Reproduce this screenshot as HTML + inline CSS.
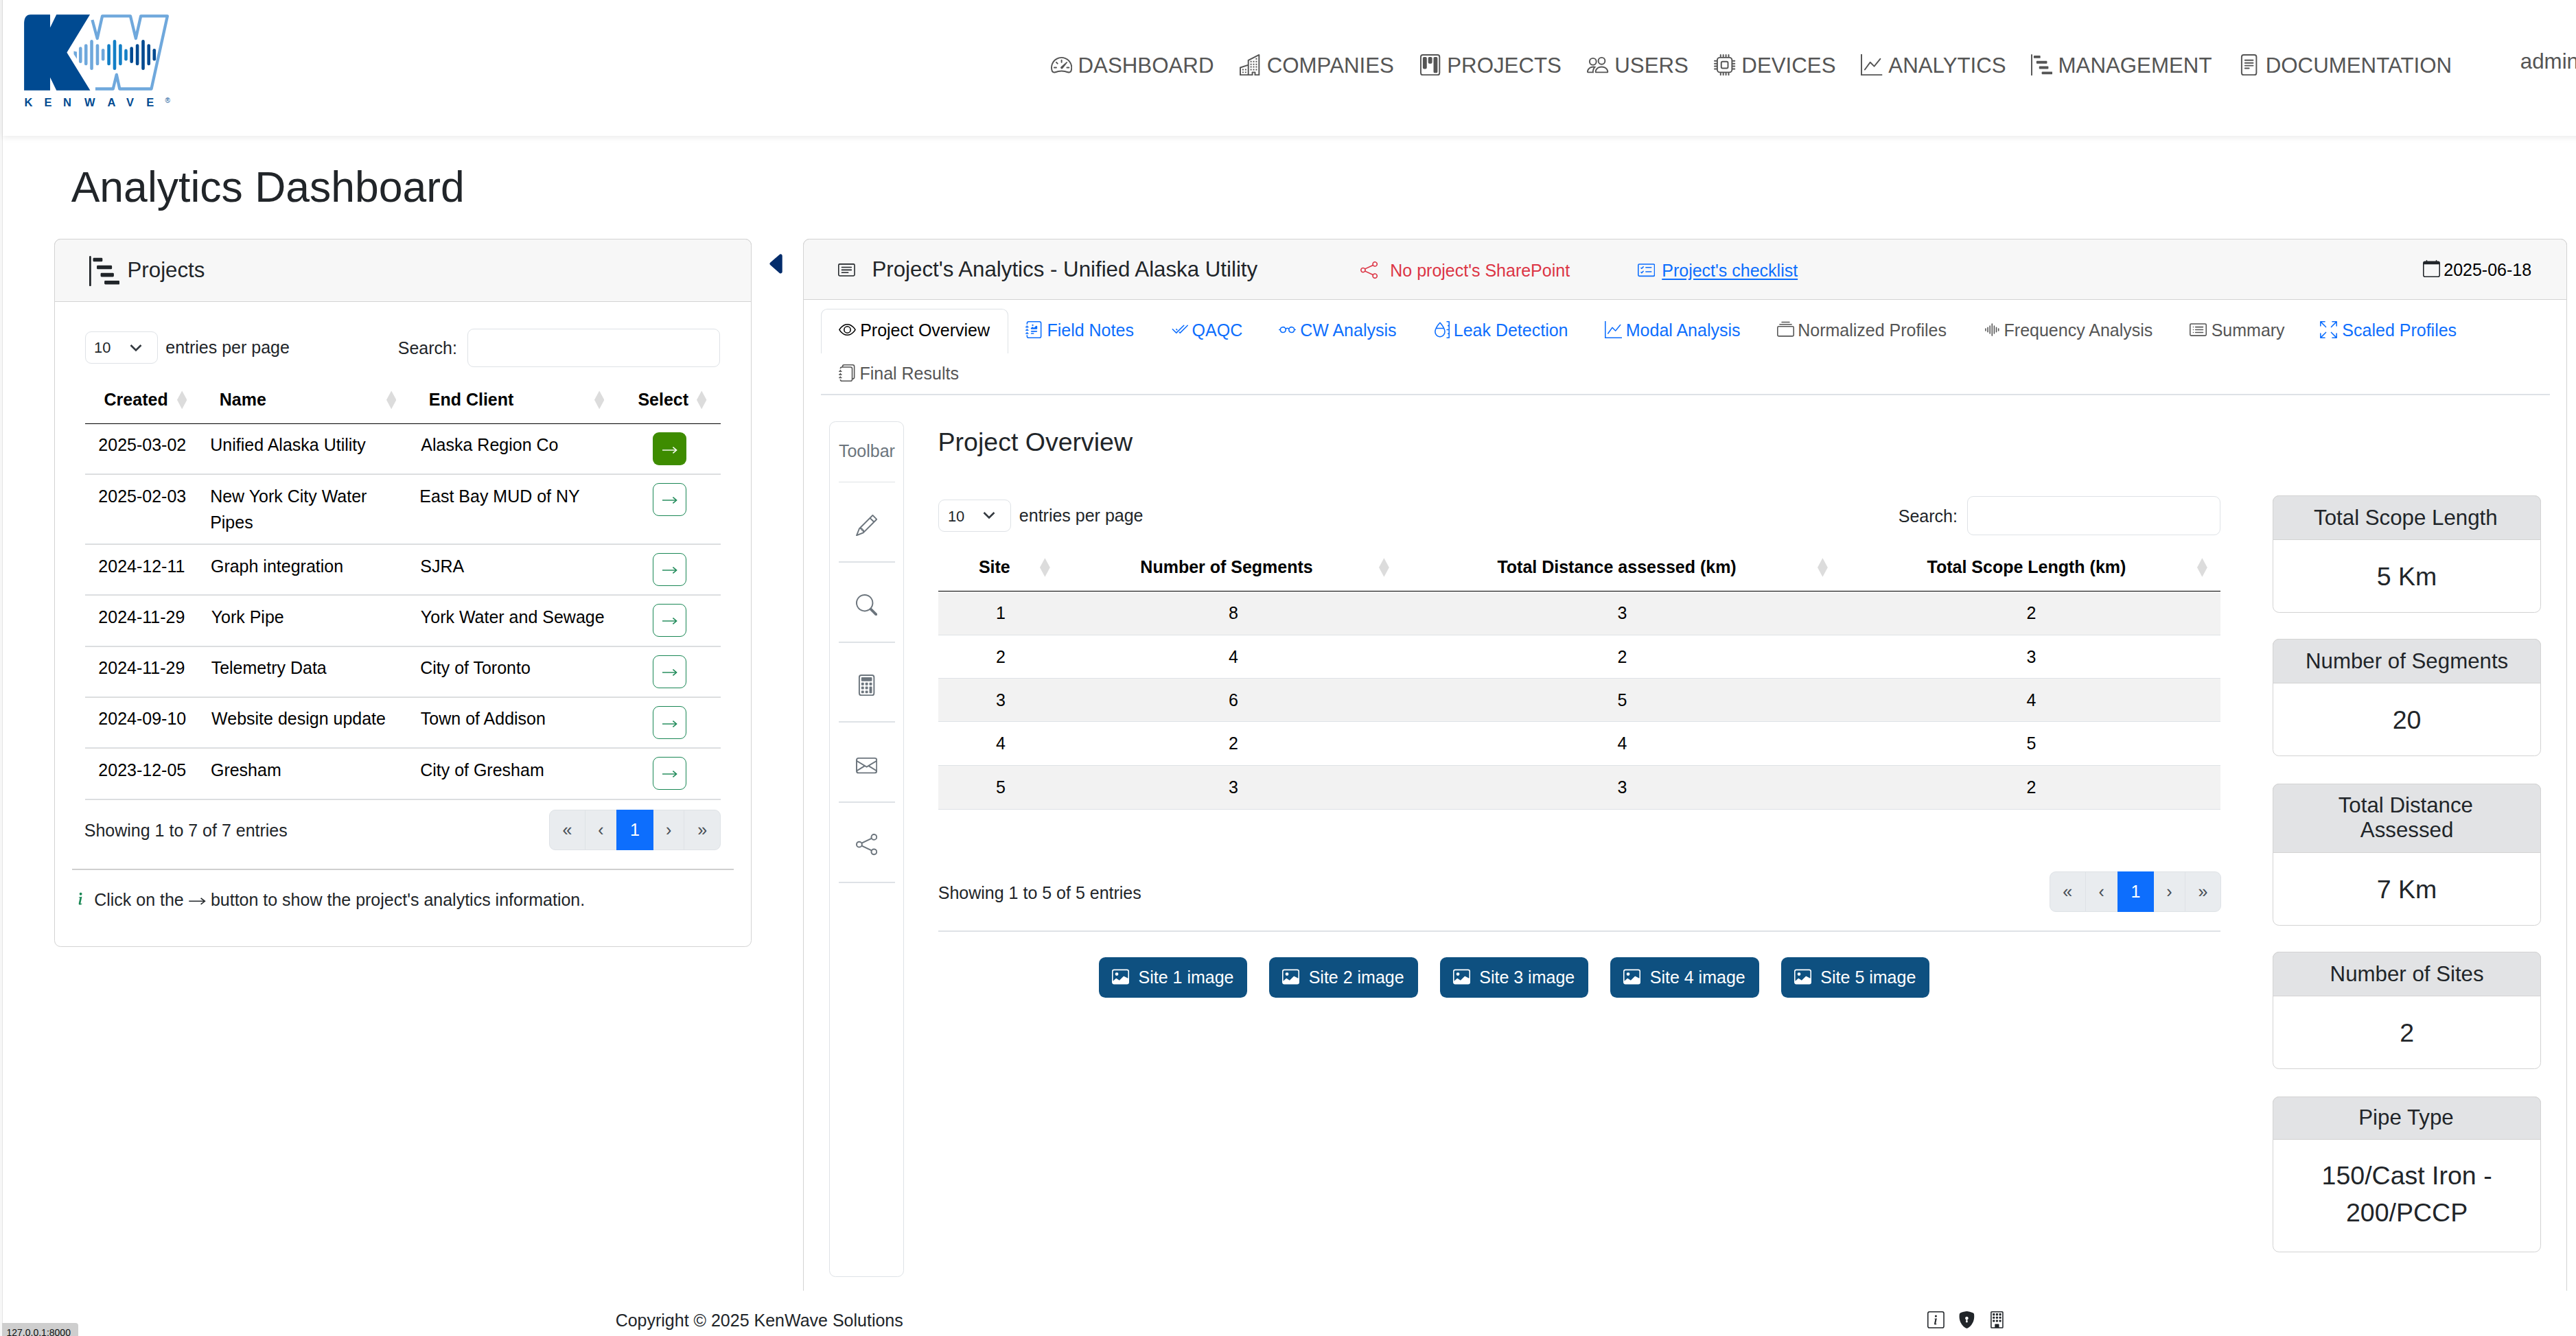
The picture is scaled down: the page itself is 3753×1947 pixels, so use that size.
<!DOCTYPE html>
<html><head><meta charset="utf-8"><title>Analytics Dashboard</title>
<style>
html,body{margin:0;padding:0;}
body{width:3753px;height:1947px;overflow:hidden;position:relative;background:#fff;font-family:"Liberation Sans",sans-serif;color:#212529;}
.a{position:absolute;}
.t{position:absolute;white-space:nowrap;line-height:1;}
svg{display:block;}
</style></head><body>
<div class="a" style="left:0.00px;top:0.00px;width:3.50px;height:1947.00px;background:#f7f7f7;border-right:1px solid #e4e4e4;box-sizing:border-box;"></div>
<div class="a" style="left:4.00px;top:-20.00px;width:3796.00px;height:218.00px;background:#fff;box-shadow:0 2px 9px rgba(0,0,0,.09);"></div>
<svg class="a" style="left:25px;top:15px" width="230" height="150" viewBox="0 0 230 150"><path d="M10.10,116.74 L10.10,19.64 Q10.10,6.17 19.64,6.17 L48.04,6.17 L48.04,25.26 L57.25,6.17 L106.07,6.17 L72.40,61.51 L106.41,116.74 L57.25,116.74 L48.04,97.65 L48.04,116.74 Z" fill="#004a91"/><polyline points="109.44,14.03 116.74,40.97 124.03,8.42 165.00,8.42 172.86,40.97 180.15,8.42 218.88,8.42 195.53,114.49 149.29,114.49 144.80,93.73 139.75,114.49 113.93,114.49" fill="none" stroke="#6fa8dc" stroke-width="4.3" stroke-linejoin="round"/><line x1="92.27" y1="55.52" x2="92.27" y2="74.69" stroke="#6fa8dc" stroke-width="4.6" stroke-linecap="round"/><line x1="100.24" y1="51.59" x2="100.24" y2="78.06" stroke="#6fa8dc" stroke-width="4.6" stroke-linecap="round"/><line x1="108.54" y1="45.41" x2="108.54" y2="84.79" stroke="#6fa8dc" stroke-width="4.6" stroke-linecap="round"/><line x1="116.96" y1="51.59" x2="116.96" y2="78.06" stroke="#6fa8dc" stroke-width="4.6" stroke-linecap="round"/><line x1="125.15" y1="58.32" x2="125.15" y2="71.32" stroke="#6fa8dc" stroke-width="4.6" stroke-linecap="round"/><line x1="133.57" y1="51.59" x2="133.57" y2="78.06" stroke="#137fc6" stroke-width="4.6" stroke-linecap="round"/><line x1="141.99" y1="45.41" x2="141.99" y2="84.79" stroke="#137fc6" stroke-width="4.6" stroke-linecap="round"/><line x1="150.41" y1="51.59" x2="150.41" y2="78.06" stroke="#137fc6" stroke-width="4.6" stroke-linecap="round"/><line x1="158.49" y1="58.88" x2="158.49" y2="71.32" stroke="#137fc6" stroke-width="4.6" stroke-linecap="round"/><line x1="166.69" y1="55.52" x2="166.69" y2="74.69" stroke="#004a91" stroke-width="4.6" stroke-linecap="round"/><line x1="175.10" y1="51.59" x2="175.10" y2="78.06" stroke="#004a91" stroke-width="4.6" stroke-linecap="round"/><line x1="183.52" y1="45.41" x2="183.52" y2="84.79" stroke="#004a91" stroke-width="4.6" stroke-linecap="round"/><line x1="191.72" y1="51.59" x2="191.72" y2="78.06" stroke="#004a91" stroke-width="4.6" stroke-linecap="round"/><line x1="199.80" y1="58.32" x2="199.80" y2="71.32" stroke="#004a91" stroke-width="4.6" stroke-linecap="round"/><polygon points="82.50,59.49 86.99,60.61 86.99,70.72 82.50,63.98" fill="#6fa8dc"/><text x="16.50" y="140.08" font-family="Liberation Sans" font-weight="bold" font-size="16.5" fill="#004a91" text-anchor="middle">K</text><text x="44.90" y="140.08" font-family="Liberation Sans" font-weight="bold" font-size="16.5" fill="#004a91" text-anchor="middle">E</text><text x="72.96" y="140.08" font-family="Liberation Sans" font-weight="bold" font-size="16.5" fill="#004a91" text-anchor="middle">N</text><text x="105.74" y="140.08" font-family="Liberation Sans" font-weight="bold" font-size="16.5" fill="#004a91" text-anchor="middle">W</text><text x="137.50" y="140.08" font-family="Liberation Sans" font-weight="bold" font-size="16.5" fill="#004a91" text-anchor="middle">A</text><text x="164.44" y="140.08" font-family="Liberation Sans" font-weight="bold" font-size="16.5" fill="#004a91" text-anchor="middle">V</text><text x="193.85" y="140.08" font-family="Liberation Sans" font-weight="bold" font-size="16.5" fill="#004a91" text-anchor="middle">E</text><text x="219.10" y="134.70" font-family="Liberation Sans" font-size="10" fill="#004a91" text-anchor="middle">&#174;</text></svg>
<span class="t" style="left:1570.54px;top:80px;font-size:31.25px;color:#555555;">DASHBOARD</span>
<svg class="a" style="left:1530.61px;top:78.66px;" width="31.25" height="31.25" viewBox="0 0 16 16" fill="#555555"><path d="M8 4a.5.5 0 0 1 .5.5V6a.5.5 0 0 1-1 0V4.5A.5.5 0 0 1 8 4M3.732 5.732a.5.5 0 0 1 .707 0l.915.914a.5.5 0 1 1-.708.708l-.914-.915a.5.5 0 0 1 0-.707M2 10a.5.5 0 0 1 .5-.5h1.586a.5.5 0 0 1 0 1H2.5A.5.5 0 0 1 2 10m9.5 0a.5.5 0 0 1 .5-.5h1.5a.5.5 0 0 1 0 1H12a.5.5 0 0 1-.5-.5m.754-4.246a.39.39 0 0 0-.527-.02L7.547 9.31a.91.91 0 1 0 1.302 1.258l3.434-4.297a.39.39 0 0 0-.029-.518z"/><path d="M0 10a8 8 0 1 1 15.547 2.661c-.442 1.253-1.845 1.602-2.932 1.25C11.309 13.488 9.475 13 8 13c-1.474 0-3.31.488-4.615.911-1.087.352-2.49.003-2.932-1.25A8 8 0 0 1 0 10m8-7a7 7 0 0 0-6.603 9.329c.203.575.923.876 1.68.63C4.397 12.533 6.358 12 8 12s3.604.532 4.923.96c.757.245 1.477-.056 1.68-.631A7 7 0 0 0 8 3"/></svg>
<span class="t" style="left:1845.71px;top:80px;font-size:31.25px;color:#555555;">COMPANIES</span>
<svg class="a" style="left:1805.78px;top:78.66px;" width="31.25" height="31.25" viewBox="0 0 16 16" fill="#555555"><path d="M14.763.075A.5.5 0 0 1 15 .5v15a.5.5 0 0 1-.5.5h-3a.5.5 0 0 1-.5-.5V14h-1v1.5a.5.5 0 0 1-.5.5h-9a.5.5 0 0 1-.5-.5V10a.5.5 0 0 1 .342-.474L6 7.64V4.5a.5.5 0 0 1 .276-.447l8-4a.5.5 0 0 1 .487.022M6 8.694 1 10.36V15h5zM7 15h2v-1.5a.5.5 0 0 1 .5-.5h2a.5.5 0 0 1 .5.5V15h2V1.309l-7 3.5z"/><path d="M2 11h1v1H2zm2 0h1v1H4zm-2 2h1v1H2zm2 0h1v1H4zm4-4h1v1H8zm2 0h1v1h-1zm-2 2h1v1H8zm2 0h1v1h-1zm2-2h1v1h-1zm0 2h1v1h-1zM8 7h1v1H8zm2 0h1v1h-1zm2 0h1v1h-1zM8 5h1v1H8zm2 0h1v1h-1zm2 0h1v1h-1zm0-2h1v1h-1z"/></svg>
<span class="t" style="left:2108.24px;top:80px;font-size:31.25px;color:#555555;">PROJECTS</span>
<svg class="a" style="left:2068.31px;top:78.66px;" width="31.25" height="31.25" viewBox="0 0 16 16" fill="#555555"><path d="M13.5 1a1 1 0 0 1 1 1v12a1 1 0 0 1-1 1h-11a1 1 0 0 1-1-1V2a1 1 0 0 1 1-1zm-11-1a2 2 0 0 0-2 2v12a2 2 0 0 0 2 2h11a2 2 0 0 0 2-2V2a2 2 0 0 0-2-2z"/><path d="M6.5 3a1 1 0 0 1 1-1h1a1 1 0 0 1 1 1v3a1 1 0 0 1-1 1h-1a1 1 0 0 1-1-1zm-4 0a1 1 0 0 1 1-1h1a1 1 0 0 1 1 1v7a1 1 0 0 1-1 1h-1a1 1 0 0 1-1-1zm8 0a1 1 0 0 1 1-1h1a1 1 0 0 1 1 1v10a1 1 0 0 1-1 1h-1a1 1 0 0 1-1-1z"/></svg>
<span class="t" style="left:2352.29px;top:80px;font-size:31.25px;color:#555555;">USERS</span>
<svg class="a" style="left:2312.36px;top:78.66px;" width="31.25" height="31.25" viewBox="0 0 16 16" fill="#555555"><path d="M15 14s1 0 1-1-1-4-5-4-5 3-5 4 1 1 1 1zm-7.978-1L7 12.996c.001-.264.167-1.03.76-1.72C8.312 10.629 9.282 10 11 10c1.717 0 2.687.63 3.24 1.276.593.69.758 1.457.76 1.72l-.008.002-.014.002zM11 7a2 2 0 1 0 0-4 2 2 0 0 0 0 4m3-2a3 3 0 1 1-6 0 3 3 0 0 1 6 0M6.936 9.28a6 6 0 0 0-1.23-.247A7 7 0 0 0 5 9c-4 0-5 3-5 4q0 1 1 1h4.216A2.24 2.24 0 0 1 5 13c0-1.01.377-2.042 1.09-2.904.243-.294.526-.569.846-.816M4.92 10A5.5 5.5 0 0 0 4 13H1c0-.26.164-1.03.76-1.724.545-.636 1.492-1.256 3.16-1.275ZM1.5 5.5a3 3 0 1 1 6 0 3 3 0 0 1-6 0m3-2a2 2 0 1 0 0 4 2 2 0 0 0 0-4"/></svg>
<span class="t" style="left:2537.34px;top:80px;font-size:31.25px;color:#555555;">DEVICES</span>
<svg class="a" style="left:2497.41px;top:78.66px;" width="31.25" height="31.25" viewBox="0 0 16 16" fill="#555555"><path d="M5 0a.5.5 0 0 1 .5.5V2h1V.5a.5.5 0 0 1 1 0V2h1V.5a.5.5 0 0 1 1 0V2h1V.5a.5.5 0 0 1 1 0V2A2.5 2.5 0 0 1 14 4.5h1.5a.5.5 0 0 1 0 1H14v1h1.5a.5.5 0 0 1 0 1H14v1h1.5a.5.5 0 0 1 0 1H14v1h1.5a.5.5 0 0 1 0 1H14a2.5 2.5 0 0 1-2.5 2.5v1.5a.5.5 0 0 1-1 0V14h-1v1.5a.5.5 0 0 1-1 0V14h-1v1.5a.5.5 0 0 1-1 0V14h-1v1.5a.5.5 0 0 1-1 0V14A2.5 2.5 0 0 1 2 11.5H.5a.5.5 0 0 1 0-1H2v-1H.5a.5.5 0 0 1 0-1H2v-1H.5a.5.5 0 0 1 0-1H2v-1H.5a.5.5 0 0 1 0-1H2A2.5 2.5 0 0 1 4.5 2V.5A.5.5 0 0 1 5 0m-.5 3A1.5 1.5 0 0 0 3 4.5v7A1.5 1.5 0 0 0 4.5 13h7a1.5 1.5 0 0 0 1.5-1.5v-7A1.5 1.5 0 0 0 11.5 3zM5 6.5A1.5 1.5 0 0 1 6.5 5h3A1.5 1.5 0 0 1 11 6.5v3A1.5 1.5 0 0 1 9.5 11h-3A1.5 1.5 0 0 1 5 9.5zM6.5 6a.5.5 0 0 0-.5.5v3a.5.5 0 0 0 .5.5h3a.5.5 0 0 0 .5-.5v-3a.5.5 0 0 0-.5-.5z"/></svg>
<span class="t" style="left:2751.34px;top:80px;font-size:31.25px;color:#555555;">ANALYTICS</span>
<svg class="a" style="left:2711.41px;top:78.66px;" width="31.25" height="31.25" viewBox="0 0 16 16" fill="#555555"><path d="M0 0h1v15h15v1H0zm14.817 3.113a.5.5 0 0 1 .07.704l-4.5 5.5a.5.5 0 0 1-.74.037L7.06 6.767l-3.656 5.027a.5.5 0 0 1-.808-.588l4-5.5a.5.5 0 0 1 .758-.06l2.609 2.61 4.15-5.073a.5.5 0 0 1 .704-.07"/></svg>
<span class="t" style="left:2998.54px;top:80px;font-size:31.25px;color:#555555;">MANAGEMENT</span>
<svg class="a" style="left:2958.61px;top:78.66px;" width="31.25" height="31.25" viewBox="0 0 16 16" fill="#555555"><path d="M.5 0a.5.5 0 0 1 .5.5v15a.5.5 0 0 1-1 0V.5A.5.5 0 0 1 .5 0M2 1.5a.5.5 0 0 1 .5-.5h4a.5.5 0 0 1 .5.5v1a.5.5 0 0 1-.5.5h-4a.5.5 0 0 1-.5-.5zm2 4a.5.5 0 0 1 .5-.5h7a.5.5 0 0 1 .5.5v1a.5.5 0 0 1-.5.5h-7a.5.5 0 0 1-.5-.5zm2 4a.5.5 0 0 1 .5-.5h6a.5.5 0 0 1 .5.5v1a.5.5 0 0 1-.5.5h-6a.5.5 0 0 1-.5-.5zm2 4a.5.5 0 0 1 .5-.5h7a.5.5 0 0 1 .5.5v1a.5.5 0 0 1-.5.5h-7a.5.5 0 0 1-.5-.5z"/></svg>
<span class="t" style="left:3300.74px;top:80px;font-size:31.25px;color:#555555;">DOCUMENTATION</span>
<svg class="a" style="left:3260.81px;top:78.66px;" width="31.25" height="31.25" viewBox="0 0 16 16" fill="#555555"><path d="M5 4a.5.5 0 0 0 0 1h6a.5.5 0 0 0 0-1zm-.5 2.5A.5.5 0 0 1 5 6h6a.5.5 0 0 1 0 1H5a.5.5 0 0 1-.5-.5M5 8a.5.5 0 0 0 0 1h6a.5.5 0 0 0 0-1zm0 2a.5.5 0 0 0 0 1h3a.5.5 0 0 0 0-1z"/><path d="M2 2a2 2 0 0 1 2-2h8a2 2 0 0 1 2 2v12a2 2 0 0 1-2 2H4a2 2 0 0 1-2-2zm10-1H4a1 1 0 0 0-1 1v12a1 1 0 0 0 1 1h8a1 1 0 0 0 1-1V2a1 1 0 0 0-1-1"/></svg>
<span class="t" style="left:3671.87px;top:74px;font-size:31.25px;color:#555555;">admin</span>
<span class="t" style="left:103.68px;top:241px;font-size:62.5px;color:#212529;">Analytics Dashboard</span>
<div class="a" style="left:78.60px;top:348.40px;width:1016.40px;height:1031.80px;border:1.5px solid #d3d3d3;border-radius:9.4px;box-sizing:border-box;background:#fff;"></div>
<div class="a" style="left:78.60px;top:348.40px;width:1016.40px;height:91.80px;border:1.5px solid #d3d3d3;border-radius:9.4px 9.4px 0 0;box-sizing:border-box;background:#f7f7f7;"></div>
<svg class="a" style="left:129.50px;top:372.80px;" width="44.20" height="44.20" viewBox="0 0 16 16" fill="#212529"><path d="M.5 0a.5.5 0 0 1 .5.5v15a.5.5 0 0 1-1 0V.5A.5.5 0 0 1 .5 0M2 1.5a.5.5 0 0 1 .5-.5h4a.5.5 0 0 1 .5.5v1a.5.5 0 0 1-.5.5h-4a.5.5 0 0 1-.5-.5zm2 4a.5.5 0 0 1 .5-.5h7a.5.5 0 0 1 .5.5v1a.5.5 0 0 1-.5.5h-7a.5.5 0 0 1-.5-.5zm2 4a.5.5 0 0 1 .5-.5h6a.5.5 0 0 1 .5.5v1a.5.5 0 0 1-.5.5h-6a.5.5 0 0 1-.5-.5zm2 4a.5.5 0 0 1 .5-.5h7a.5.5 0 0 1 .5.5v1a.5.5 0 0 1-.5.5h-7a.5.5 0 0 1-.5-.5z"/></svg>
<span class="t" style="left:185.54px;top:378px;font-size:31.25px;color:#212529;">Projects</span>
<div class="a" style="left:124.30px;top:483.40px;width:106.10px;height:46.30px;border:1.5px solid #dee2e6;border-radius:9px;box-sizing:border-box;background:#fff;"></div>
<span class="t" style="left:137.03px;top:496px;font-size:21.875px;color:#212529;">10</span>
<svg class="a" style="left:189.40px;top:500.55px" width="18" height="12" viewBox="0 0 18 12"><polyline points="1.5,2 9,9.5 16.5,2" fill="none" stroke="#343a40" stroke-width="2.6"/></svg>
<span class="t" style="left:241.24px;top:494px;font-size:25px;color:#212529;">entries per page</span>
<span class="t" style="left:579.76px;top:495px;font-size:25px;color:#212529;">Search:</span>
<div class="a" style="left:680.70px;top:478.60px;width:368.80px;height:56.60px;border:1.5px solid #dee2e6;border-radius:9px;box-sizing:border-box;background:#fff;"></div>
<span class="t" style="left:151.57px;top:570px;font-size:25px;font-weight:bold;color:#000;">Created</span>
<span class="t" style="left:319.73px;top:570px;font-size:25px;font-weight:bold;color:#000;">Name</span>
<span class="t" style="left:624.73px;top:570px;font-size:25px;font-weight:bold;color:#000;">End Client</span>
<span class="t" style="left:929.38px;top:570px;font-size:25px;font-weight:bold;color:#000;">Select</span>
<svg class="a" style="left:257.50px;top:568.50px" width="14.40" height="27.70" viewBox="0 0 15 28"><polygon points="7.5,0 15,14 7.5,28 0,14" fill="#dcdcdc"/></svg>
<svg class="a" style="left:563.00px;top:568.50px" width="14.40" height="27.70" viewBox="0 0 15 28"><polygon points="7.5,0 15,14 7.5,28 0,14" fill="#dcdcdc"/></svg>
<svg class="a" style="left:866.00px;top:568.50px" width="14.40" height="27.70" viewBox="0 0 15 28"><polygon points="7.5,0 15,14 7.5,28 0,14" fill="#dcdcdc"/></svg>
<svg class="a" style="left:1015.30px;top:568.50px" width="14.40" height="27.70" viewBox="0 0 15 28"><polygon points="7.5,0 15,14 7.5,28 0,14" fill="#dcdcdc"/></svg>
<div class="a" style="left:124.00px;top:617.00px;width:925.80px;height:1.00px;background:#000;"></div>
<div class="a" style="left:124.00px;top:690.00px;width:925.80px;height:2.00px;background:linear-gradient(#dee2e6 50%,#dadada 50%);"></div>
<div class="a" style="left:124.00px;top:792.00px;width:925.80px;height:2.00px;background:linear-gradient(#dee2e6 50%,#dadada 50%);"></div>
<div class="a" style="left:124.00px;top:866.00px;width:925.80px;height:2.00px;background:linear-gradient(#dee2e6 50%,#dadada 50%);"></div>
<div class="a" style="left:124.00px;top:941.00px;width:925.80px;height:2.00px;background:linear-gradient(#dee2e6 50%,#dadada 50%);"></div>
<div class="a" style="left:124.00px;top:1015.00px;width:925.80px;height:2.00px;background:linear-gradient(#dee2e6 50%,#dadada 50%);"></div>
<div class="a" style="left:124.00px;top:1089.00px;width:925.80px;height:2.00px;background:linear-gradient(#dee2e6 50%,#dadada 50%);"></div>
<div class="a" style="left:124.00px;top:1164.00px;width:925.80px;height:2.00px;background:linear-gradient(#dee2e6 50%,#dadada 50%);"></div>
<span class="t" style="left:143.34px;top:636px;font-size:25px;color:#000;">2025-03-02</span>
<span class="t" style="left:306.27px;top:636px;font-size:25px;color:#000;">Unified Alaska Utility</span>
<span class="t" style="left:613.35px;top:636px;font-size:25px;color:#000;">Alaska Region Co</span>
<div class="a" style="left:951.00px;top:630.30px;width:49.00px;height:47.90px;background:#3e8c00;border-radius:9px;"></div>
<svg class="a" style="left:960px;top:647.80px" width="32" height="16" viewBox="960 647.80 32 16"><line x1="965" y1="655.80" x2="985.2" y2="655.80" stroke="#fff" stroke-width="1.4"/><polyline points="980.4,651.40 985.6,655.80 980.4,660.20" fill="none" stroke="#fff" stroke-width="1.5"/></svg>
<span class="t" style="left:143.34px;top:711px;font-size:25px;color:#000;">2025-02-03</span>
<span class="t" style="left:306.15px;top:711px;font-size:25px;color:#000;">New York City Water</span>
<span class="t" style="left:306.15px;top:749px;font-size:25px;color:#000;">Pipes</span>
<span class="t" style="left:611.35px;top:711px;font-size:25px;color:#000;">East Bay MUD of NY</span>
<div class="a" style="left:951.00px;top:703.80px;width:49.00px;height:47.90px;border:1.5px solid #198754;border-radius:9px;box-sizing:border-box;"></div>
<svg class="a" style="left:960px;top:721.30px" width="32" height="16" viewBox="960 721.30 32 16"><line x1="965" y1="729.30" x2="985.2" y2="729.30" stroke="#198754" stroke-width="1.4"/><polyline points="980.4,724.90 985.6,729.30 980.4,733.70" fill="none" stroke="#198754" stroke-width="1.5"/></svg>
<span class="t" style="left:143.34px;top:813px;font-size:25px;color:#000;">2024-12-11</span>
<span class="t" style="left:306.94px;top:813px;font-size:25px;color:#000;">Graph integration</span>
<span class="t" style="left:612.26px;top:813px;font-size:25px;color:#000;">SJRA</span>
<div class="a" style="left:951.00px;top:805.90px;width:49.00px;height:47.90px;border:1.5px solid #198754;border-radius:9px;box-sizing:border-box;"></div>
<svg class="a" style="left:960px;top:823.40px" width="32" height="16" viewBox="960 823.40 32 16"><line x1="965" y1="831.40" x2="985.2" y2="831.40" stroke="#198754" stroke-width="1.4"/><polyline points="980.4,827.00 985.6,831.40 980.4,835.80" fill="none" stroke="#198754" stroke-width="1.5"/></svg>
<span class="t" style="left:143.34px;top:887px;font-size:25px;color:#000;">2024-11-29</span>
<span class="t" style="left:307.65px;top:887px;font-size:25px;color:#000;">York Pipe</span>
<span class="t" style="left:612.85px;top:887px;font-size:25px;color:#000;">York Water and Sewage</span>
<div class="a" style="left:951.00px;top:879.90px;width:49.00px;height:47.90px;border:1.5px solid #198754;border-radius:9px;box-sizing:border-box;"></div>
<svg class="a" style="left:960px;top:897.40px" width="32" height="16" viewBox="960 897.40 32 16"><line x1="965" y1="905.40" x2="985.2" y2="905.40" stroke="#198754" stroke-width="1.4"/><polyline points="980.4,901.00 985.6,905.40 980.4,909.80" fill="none" stroke="#198754" stroke-width="1.5"/></svg>
<span class="t" style="left:143.34px;top:961px;font-size:25px;color:#000;">2024-11-29</span>
<span class="t" style="left:307.64px;top:961px;font-size:25px;color:#000;">Telemetry Data</span>
<span class="t" style="left:612.13px;top:961px;font-size:25px;color:#000;">City of Toronto</span>
<div class="a" style="left:951.00px;top:954.80px;width:49.00px;height:47.90px;border:1.5px solid #198754;border-radius:9px;box-sizing:border-box;"></div>
<svg class="a" style="left:960px;top:972.30px" width="32" height="16" viewBox="960 972.30 32 16"><line x1="965" y1="980.30" x2="985.2" y2="980.30" stroke="#198754" stroke-width="1.4"/><polyline points="980.4,975.90 985.6,980.30 980.4,984.70" fill="none" stroke="#198754" stroke-width="1.5"/></svg>
<span class="t" style="left:143.34px;top:1035px;font-size:25px;color:#000;">2024-09-10</span>
<span class="t" style="left:308.09px;top:1035px;font-size:25px;color:#000;">Website design update</span>
<span class="t" style="left:612.84px;top:1035px;font-size:25px;color:#000;">Town of Addison</span>
<div class="a" style="left:951.00px;top:1029.00px;width:49.00px;height:47.90px;border:1.5px solid #198754;border-radius:9px;box-sizing:border-box;"></div>
<svg class="a" style="left:960px;top:1046.50px" width="32" height="16" viewBox="960 1046.50 32 16"><line x1="965" y1="1054.50" x2="985.2" y2="1054.50" stroke="#198754" stroke-width="1.4"/><polyline points="980.4,1050.10 985.6,1054.50 980.4,1058.90" fill="none" stroke="#198754" stroke-width="1.5"/></svg>
<span class="t" style="left:143.34px;top:1110px;font-size:25px;color:#000;">2023-12-05</span>
<span class="t" style="left:306.94px;top:1110px;font-size:25px;color:#000;">Gresham</span>
<span class="t" style="left:612.13px;top:1110px;font-size:25px;color:#000;">City of Gresham</span>
<div class="a" style="left:951.00px;top:1102.80px;width:49.00px;height:47.90px;border:1.5px solid #198754;border-radius:9px;box-sizing:border-box;"></div>
<svg class="a" style="left:960px;top:1120.30px" width="32" height="16" viewBox="960 1120.30 32 16"><line x1="965" y1="1128.30" x2="985.2" y2="1128.30" stroke="#198754" stroke-width="1.4"/><polyline points="980.4,1123.90 985.6,1128.30 980.4,1132.70" fill="none" stroke="#198754" stroke-width="1.5"/></svg>
<div class="a" style="left:800.10px;top:1179.90px;width:249.70px;height:58.70px;background:#e9ecef;border:1.5px solid #dee2e6;border-radius:9px;box-sizing:border-box;"></div>
<span class="t" style="left:819.45px;top:1197px;font-size:25px;color:#495057;">«</span>
<div class="a" style="left:852.20px;top:1179.90px;width:1.00px;height:58.70px;background:#dee2e6;"></div>
<span class="t" style="left:871.19px;top:1197px;font-size:25px;color:#495057;">‹</span>
<div class="a" style="left:898.00px;top:1179.90px;width:54.00px;height:58.70px;background:#0d6efd;"></div>
<span class="t" style="left:918.05px;top:1197px;font-size:25px;color:#fff;">1</span>
<span class="t" style="left:970.09px;top:1197px;font-size:25px;color:#495057;">›</span>
<div class="a" style="left:996.00px;top:1179.90px;width:1.00px;height:58.70px;background:#dee2e6;"></div>
<div class="a" style="left:996.00px;top:1179.90px;width:1.00px;height:58.70px;background:#dee2e6;"></div>
<span class="t" style="left:1016.20px;top:1197px;font-size:25px;color:#495057;">»</span>
<span class="t" style="left:122.76px;top:1198px;font-size:25px;color:#212529;">Showing 1 to 7 of 7 entries</span>
<div class="a" style="left:104.90px;top:1266.40px;width:963.90px;height:1.60px;background:#cfcfcf;"></div>
<svg class="a" style="left:101.91px;top:1293.97px;" width="31.25" height="31.25" viewBox="0 0 16 16" fill="#198754"><path d="m8.93 6.588-2.29.287-.082.38.45.083c.294.07.352.176.288.469l-.738 3.468c-.194.897.105 1.319.808 1.319.545 0 1.178-.252 1.465-.598l.088-.416c-.2.176-.492.246-.686.246-.275 0-.375-.193-.304-.533zM9 4.5a1 1 0 1 1-2 0 1 1 0 0 1 2 0"/></svg>
<span class="t" style="left:137.13px;top:1299px;font-size:25px;color:#212529;">Click on the </span>
<span class="t" style="left:306.89px;top:1299px;font-size:25px;color:#212529;">button to show the project's analytics information.</span>
<svg class="a" style="left:270px;top:1303px" width="34" height="20" viewBox="270 1303 34 20"><line x1="275.3" y1="1313.3" x2="298" y2="1313.3" stroke="#212529" stroke-width="1.5"/><polyline points="292.6,1308.8 298.4,1313.3 292.6,1317.8" fill="none" stroke="#212529" stroke-width="1.6"/></svg>
<svg class="a" style="left:1112.81px;top:364.55px;" width="38.88" height="38.88" viewBox="0 0 16 16" fill="#032c6b"><path d="m3.86 8.753 5.482 4.796c.646.566 1.658.106 1.658-.753V3.204a1 1 0 0 0-1.659-.753l-5.48 4.796a1 1 0 0 0 0 1.506z"/></svg>
<div class="a" style="left:1170.00px;top:348.40px;width:2570.20px;height:1611.60px;border:1.5px solid #d3d3d3;border-radius:9.4px;box-sizing:border-box;background:#fff;"></div>
<div class="a" style="left:1170.00px;top:348.40px;width:2570.20px;height:88.80px;border:1.5px solid #d3d3d3;border-radius:9.4px 9.4px 0 0;box-sizing:border-box;background:#f7f7f7;"></div>
<svg class="a" style="left:1220.90px;top:380.90px;" width="24.80" height="24.80" viewBox="0 0 16 16" fill="#212529"><path d="M14.5 3a.5.5 0 0 1 .5.5v9a.5.5 0 0 1-.5.5h-13a.5.5 0 0 1-.5-.5v-9a.5.5 0 0 1 .5-.5zm-13-1A1.5 1.5 0 0 0 0 3.5v9A1.5 1.5 0 0 0 1.5 14h13a1.5 1.5 0 0 0 1.5-1.5v-9A1.5 1.5 0 0 0 14.5 2z"/><path d="M3 5.5a.5.5 0 0 1 .5-.5h9a.5.5 0 0 1 0 1h-9a.5.5 0 0 1-.5-.5M3 8a.5.5 0 0 1 .5-.5h9a.5.5 0 0 1 0 1h-9A.5.5 0 0 1 3 8m0 2.5a.5.5 0 0 1 .5-.5h6a.5.5 0 0 1 0 1h-6a.5.5 0 0 1-.5-.5"/></svg>
<span class="t" style="left:1270.44px;top:377px;font-size:31.25px;color:#212529;">Project's Analytics - Unified Alaska Utility</span>
<svg class="a" style="left:1982.40px;top:381.40px;" width="25.10" height="25.10" viewBox="0 0 16 16" fill="#dc3545"><path d="M13.5 1a1.5 1.5 0 1 0 0 3 1.5 1.5 0 0 0 0-3M11 2.5a2.5 2.5 0 1 1 .603 1.628l-6.718 3.12a2.5 2.5 0 0 1 0 1.504l6.718 3.12a2.5 2.5 0 1 1-.488.876l-6.718-3.12a2.5 2.5 0 1 1 0-3.256l6.718-3.12A2.5 2.5 0 0 1 11 2.5m-8.5 4a1.5 1.5 0 1 0 0 3 1.5 1.5 0 0 0 0-3m11 5.5a1.5 1.5 0 1 0 0 3 1.5 1.5 0 0 0 0-3"/></svg>
<span class="t" style="left:2025.25px;top:382px;font-size:25px;color:#dc3545;">No project's SharePoint</span>
<svg class="a" style="left:2385.60px;top:380.84px;" width="25.30" height="25.30" viewBox="0 0 16 16" fill="#0d6efd"><path d="M14.5 3a.5.5 0 0 1 .5.5v9a.5.5 0 0 1-.5.5h-13a.5.5 0 0 1-.5-.5v-9a.5.5 0 0 1 .5-.5zm-13-1A1.5 1.5 0 0 0 0 3.5v9A1.5 1.5 0 0 0 1.5 14h13a1.5 1.5 0 0 0 1.5-1.5v-9A1.5 1.5 0 0 0 14.5 2z"/><path d="M7 5.5a.5.5 0 0 1 .5-.5h5a.5.5 0 0 1 0 1h-5a.5.5 0 0 1-.5-.5m-1.496-.854a.5.5 0 0 1 0 .708l-1.5 1.5a.5.5 0 0 1-.708 0l-.5-.5a.5.5 0 1 1 .708-.708l.146.147 1.146-1.147a.5.5 0 0 1 .708 0M7 9.5a.5.5 0 0 1 .5-.5h5a.5.5 0 0 1 0 1h-5a.5.5 0 0 1-.5-.5m-1.496-.854a.5.5 0 0 1 0 .708l-1.5 1.5a.5.5 0 0 1-.708 0l-.5-.5a.5.5 0 0 1 .708-.708l.146.147 1.146-1.147a.5.5 0 0 1 .708 0"/></svg>
<span class="t" style="left:2421.25px;top:382px;font-size:25px;color:#0d6efd;text-decoration:underline;text-underline-offset:3px;">Project's checklist</span>
<svg class="a" style="left:3529.70px;top:379.40px;" width="25.00" height="25.00" viewBox="0 0 16 16" fill="#212529"><path d="M3.5 0a.5.5 0 0 1 .5.5V1h8V.5a.5.5 0 0 1 1 0V1h1a2 2 0 0 1 2 2v11a2 2 0 0 1-2 2H2a2 2 0 0 1-2-2V3a2 2 0 0 1 2-2h1V.5a.5.5 0 0 1 .5-.5M1 4v10a1 1 0 0 0 1 1h12a1 1 0 0 0 1-1V4z"/></svg>
<span class="t" style="left:3560.24px;top:381px;font-size:25px;color:#000;">2025-06-18</span>
<div class="a" style="left:1195.80px;top:574.30px;width:2518.80px;height:1.60px;background:#dee2e6;"></div>
<div class="a" style="left:1196.30px;top:449.80px;width:272.50px;height:65.20px;border:1.5px solid #dee2e6;border-bottom:none;border-radius:9.4px 9.4px 0 0;box-sizing:border-box;background:#fff;"></div>
<svg class="a" style="left:1221.90px;top:468.12px;" width="25.00" height="25.00" viewBox="0 0 16 16" fill="#000"><path d="M16 8s-3-5.5-8-5.5S0 8 0 8s3 5.5 8 5.5S16 8 16 8M1.173 8a13 13 0 0 1 1.66-2.043C4.12 4.668 5.88 3.5 8 3.5s3.879 1.168 5.168 2.457A13 13 0 0 1 14.828 8q-.086.13-.195.288c-.335.48-.83 1.12-1.465 1.755C11.879 11.332 10.119 12.5 8 12.5s-3.879-1.168-5.168-2.457A13 13 0 0 1 1.172 8z"/><path d="M8 5.5a2.5 2.5 0 1 0 0 5 2.5 2.5 0 0 0 0-5M4.5 8a3.5 3.5 0 1 1 7 0 3.5 3.5 0 0 1-7 0"/></svg>
<span class="t" style="left:1253.15px;top:469px;font-size:25px;color:#000;">Project Overview</span>
<svg class="a" style="left:1493.94px;top:468.12px;" width="25.00" height="25.00" viewBox="0 0 16 16" fill="#0d6efd"><path d="M7.5 3.75a.75.75 0 1 1-1.5 0 .75.75 0 0 1 1.5 0m-.861 1.542 1.33.886 1.854-1.855a.25.25 0 0 1 .289-.047L11 4.75V7a.5.5 0 0 1-.5.5h-5A.5.5 0 0 1 5 7v-.5s1.54-1.274 1.639-1.208M5 9.5a.5.5 0 0 1 .5-.5h5a.5.5 0 0 1 0 1h-5a.5.5 0 0 1-.5-.5m0 2a.5.5 0 0 1 .5-.5h2a.5.5 0 0 1 0 1h-2a.5.5 0 0 1-.5-.5"/><path d="M3 0h10a2 2 0 0 1 2 2v12a2 2 0 0 1-2 2H3a2 2 0 0 1-2-2v-1h1v1a1 1 0 0 0 1 1h10a1 1 0 0 0 1-1V2a1 1 0 0 0-1-1H3a1 1 0 0 0-1 1v1H1V2a2 2 0 0 1 2-2"/><path d="M1 5v-.5a.5.5 0 0 1 1 0V5h.5a.5.5 0 0 1 0 1h-2a.5.5 0 0 1 0-1zm0 3v-.5a.5.5 0 0 1 1 0V8h.5a.5.5 0 0 1 0 1h-2a.5.5 0 0 1 0-1zm0 3v-.5a.5.5 0 0 1 1 0v.5h.5a.5.5 0 0 1 0 1h-2a.5.5 0 0 1 0-1z"/></svg>
<span class="t" style="left:1525.45px;top:469px;font-size:25px;color:#0d6efd;">Field Notes</span>
<svg class="a" style="left:1706.30px;top:468.12px;" width="25.00" height="25.00" viewBox="0 0 16 16" fill="#0d6efd"><path d="M12.354 4.354a.5.5 0 0 0-.708-.708L5 10.293 1.854 7.146a.5.5 0 1 0-.708.708l3.5 3.5a.5.5 0 0 0 .708 0zm-4.208 7-.896-.897.707-.707.543.543 6.646-6.647a.5.5 0 0 1 .708.708l-7 7a.5.5 0 0 1-.708 0"/><path d="m5.354 7.146.896.897-.707.707-.897-.896a.5.5 0 1 1 .708-.708"/></svg>
<span class="t" style="left:1736.62px;top:469px;font-size:25px;color:#0d6efd;">QAQC</span>
<svg class="a" style="left:1862.90px;top:468.12px;" width="25.00" height="25.00" viewBox="0 0 16 16" fill="#0d6efd"><path d="M4 6a2 2 0 1 1 0 4 2 2 0 0 1 0-4m2.625.547a3 3 0 0 0-5.584.953H.5a.5.5 0 0 0 0 1h.541A3 3 0 0 0 7 8a1 1 0 0 1 2 0 3 3 0 0 0 5.959.5h.541a.5.5 0 0 0 0-1h-.541a3 3 0 0 0-5.584-.953A2 2 0 0 0 8 6c-.532 0-1.016.208-1.375.547M14 8a2 2 0 1 1-4 0 2 2 0 0 1 4 0"/></svg>
<span class="t" style="left:1894.23px;top:469px;font-size:25px;color:#0d6efd;">CW Analysis</span>
<svg class="a" style="left:2086.88px;top:468.12px;" width="25.00" height="25.00" viewBox="0 0 16 16" fill="#0d6efd"><path d="M13.5 0a.5.5 0 0 0 0 1H15v2.75h-.5a.5.5 0 0 0 0 1h.5V7.5h-1.5a.5.5 0 0 0 0 1H15v2.75h-.5a.5.5 0 0 0 0 1h.5V15h-1.5a.5.5 0 0 0 0 1h2a.5.5 0 0 0 .5-.5V.5a.5.5 0 0 0-.5-.5zM7 1.5l.364-.343a.5.5 0 0 0-.728 0l-.002.002-.006.007-.022.023-.08.088a29 29 0 0 0-1.274 1.517c-.769.983-1.714 2.325-2.385 3.727C2.368 7.564 2 8.682 2 9.733 2 12.614 4.212 15 7 15s5-2.386 5-5.267c0-1.05-.368-2.169-.867-3.212-.671-1.402-1.616-2.744-2.385-3.727a29 29 0 0 0-1.354-1.605l-.022-.023-.006-.007-.002-.001L7 1.5zm0 0-.364-.343zm-.016.766L7 2.247l.016.019c.24.274.572.667.944 1.144.611.781 1.32 1.776 1.901 2.827H4.14c.58-1.051 1.29-2.046 1.9-2.827.373-.477.706-.87.945-1.144zM3 9.733c0-.755.244-1.612.638-2.496h6.724c.395.884.638 1.741.638 2.496C11 12.117 9.182 14 7 14s-4-1.883-4-4.267"/></svg>
<span class="t" style="left:2117.75px;top:469px;font-size:25px;color:#0d6efd;">Leak Detection</span>
<svg class="a" style="left:2337.80px;top:468.12px;" width="25.00" height="25.00" viewBox="0 0 16 16" fill="#0d6efd"><path d="M0 0h1v15h15v1H0zm14.817 3.113a.5.5 0 0 1 .07.704l-4.5 5.5a.5.5 0 0 1-.74.037L7.06 6.767l-3.656 5.027a.5.5 0 0 1-.808-.588l4-5.5a.5.5 0 0 1 .758-.06l2.609 2.61 4.15-5.073a.5.5 0 0 1 .704-.07"/></svg>
<span class="t" style="left:2368.75px;top:469px;font-size:25px;color:#0d6efd;">Modal Analysis</span>
<svg class="a" style="left:2588.60px;top:468.12px;" width="25.00" height="25.00" viewBox="0 0 16 16" fill="#555555"><path d="M2.5 3.5a.5.5 0 0 1 0-1h11a.5.5 0 0 1 0 1zm2-2a.5.5 0 0 1 0-1h7a.5.5 0 0 1 0 1zM0 13a1.5 1.5 0 0 0 1.5 1.5h13A1.5 1.5 0 0 0 16 13V6a1.5 1.5 0 0 0-1.5-1.5h-13A1.5 1.5 0 0 0 0 6zm1.5.5A.5.5 0 0 1 1 13V6a.5.5 0 0 1 .5-.5h13a.5.5 0 0 1 .5.5v7a.5.5 0 0 1-.5.5z"/></svg>
<span class="t" style="left:2619.25px;top:469px;font-size:25px;color:#555555;">Normalized Profiles</span>
<svg class="a" style="left:2888.97px;top:468.12px;" width="25.00" height="25.00" viewBox="0 0 16 16" fill="#555555"><path d="M8.5 2a.5.5 0 0 1 .5.5v11a.5.5 0 0 1-1 0v-11a.5.5 0 0 1 .5-.5m-2 2a.5.5 0 0 1 .5.5v7a.5.5 0 0 1-1 0v-7a.5.5 0 0 1 .5-.5m4 0a.5.5 0 0 1 .5.5v7a.5.5 0 0 1-1 0v-7a.5.5 0 0 1 .5-.5m-6 1.5A.5.5 0 0 1 5 6v4a.5.5 0 0 1-1 0V6a.5.5 0 0 1 .5-.5m8 0a.5.5 0 0 1 .5.5v4a.5.5 0 0 1-1 0V6a.5.5 0 0 1 .5-.5m-10 1A.5.5 0 0 1 3 7v2a.5.5 0 0 1-1 0V7a.5.5 0 0 1 .5-.5m12 0a.5.5 0 0 1 .5.5v2a.5.5 0 0 1-1 0V7a.5.5 0 0 1 .5-.5"/></svg>
<span class="t" style="left:2919.55px;top:469px;font-size:25px;color:#555555;">Frequency Analysis</span>
<svg class="a" style="left:3189.60px;top:468.12px;" width="25.00" height="25.00" viewBox="0 0 16 16" fill="#555555"><path d="M14.5 3a.5.5 0 0 1 .5.5v9a.5.5 0 0 1-.5.5h-13a.5.5 0 0 1-.5-.5v-9a.5.5 0 0 1 .5-.5zm-13-1A1.5 1.5 0 0 0 0 3.5v9A1.5 1.5 0 0 0 1.5 14h13a1.5 1.5 0 0 0 1.5-1.5v-9A1.5 1.5 0 0 0 14.5 2z"/><path d="M5 8a.5.5 0 0 1 .5-.5h7a.5.5 0 0 1 0 1h-7A.5.5 0 0 1 5 8m0-2.5a.5.5 0 0 1 .5-.5h7a.5.5 0 0 1 0 1h-7a.5.5 0 0 1-.5-.5m0 5a.5.5 0 0 1 .5-.5h7a.5.5 0 0 1 0 1h-7a.5.5 0 0 1-.5-.5m-1-5a.5.5 0 1 1-1 0 .5.5 0 0 1 1 0M4 8a.5.5 0 1 1-1 0 .5.5 0 0 1 1 0m0 2.5a.5.5 0 1 1-1 0 .5.5 0 0 1 1 0"/></svg>
<span class="t" style="left:3221.66px;top:469px;font-size:25px;color:#555555;">Summary</span>
<svg class="a" style="left:3380.00px;top:468.12px;" width="25.00" height="25.00" viewBox="0 0 16 16" fill="#0d6efd"><path d="M5.828 10.172a.5.5 0 0 0-.707 0l-4.096 4.096V11.5a.5.5 0 0 0-1 0v3.975a.5.5 0 0 0 .5.5H4.5a.5.5 0 0 0 0-1H1.732l4.096-4.096a.5.5 0 0 0 0-.707m4.344 0a.5.5 0 0 1 .707 0l4.096 4.096V11.5a.5.5 0 1 1 1 0v3.975a.5.5 0 0 1-.5.5H11.5a.5.5 0 0 1 0-1h2.768l-4.096-4.096a.5.5 0 0 1 0-.707m0-4.344a.5.5 0 0 0 .707 0l4.096-4.096V4.5a.5.5 0 1 0 1 0V.525a.5.5 0 0 0-.5-.5H11.5a.5.5 0 0 0 0 1h2.768l-4.096 4.096a.5.5 0 0 0 0 .707m-4.344 0a.5.5 0 0 1-.707 0L1.025 1.732V4.5a.5.5 0 0 1-1 0V.525a.5.5 0 0 1 .5-.5H4.5a.5.5 0 0 1 0 1H1.732l4.096 4.096a.5.5 0 0 1 0 .707"/></svg>
<span class="t" style="left:3412.36px;top:469px;font-size:25px;color:#0d6efd;">Scaled Profiles</span>
<svg class="a" style="left:1221.90px;top:531.12px;" width="25.00" height="25.00" viewBox="0 0 16 16" fill="#555555"><path d="M5 0h8a2 2 0 0 1 2 2v10a2 2 0 0 1-2 2 2 2 0 0 1-2 2H3a2 2 0 0 1-2-2h1a1 1 0 0 0 1 1h8a1 1 0 0 0 1-1V4a1 1 0 0 0-1-1H3a1 1 0 0 0-1 1H1a2 2 0 0 1 2-2h8a2 2 0 0 1 2 2v9a1 1 0 0 0 1-1V2a1 1 0 0 0-1-1H5a1 1 0 0 0-1 1H3a2 2 0 0 1 2-2"/><path d="M1 6v-.5a.5.5 0 0 1 1 0V6h.5a.5.5 0 0 1 0 1h-2a.5.5 0 0 1 0-1zm0 3v-.5a.5.5 0 0 1 1 0V9h.5a.5.5 0 0 1 0 1h-2a.5.5 0 0 1 0-1zm0 2.5v.5H.5a.5.5 0 0 0 0 1h2a.5.5 0 0 0 0-1H2v-.5a.5.5 0 0 0-1 0"/></svg>
<span class="t" style="left:1252.45px;top:532px;font-size:25px;color:#555555;">Final Results</span>
<div class="a" style="left:1207.80px;top:613.90px;width:108.80px;height:1247.60px;border:1.5px solid #dee2e6;border-radius:9.4px;box-sizing:border-box;background:#fff;"></div>
<span class="t" style="left:1221.94px;top:645px;font-size:25px;color:#6c757d;">Toolbar</span>
<div class="a" style="left:1222.00px;top:701.75px;width:82.10px;height:1.50px;background:#dee2e6;"></div>
<div class="a" style="left:1222.00px;top:818.35px;width:82.10px;height:1.50px;background:#dee2e6;"></div>
<div class="a" style="left:1222.00px;top:935.25px;width:82.10px;height:1.50px;background:#dee2e6;"></div>
<div class="a" style="left:1222.00px;top:1051.25px;width:82.10px;height:1.50px;background:#dee2e6;"></div>
<div class="a" style="left:1222.00px;top:1168.25px;width:82.10px;height:1.50px;background:#dee2e6;"></div>
<div class="a" style="left:1222.00px;top:1285.25px;width:82.10px;height:1.50px;background:#dee2e6;"></div>
<svg class="a" style="left:1246.90px;top:750.00px;" width="31.25" height="31.25" viewBox="0 0 16 16" fill="#6c757d"><path d="M12.146.146a.5.5 0 0 1 .708 0l3 3a.5.5 0 0 1 0 .708l-10 10a.5.5 0 0 1-.168.11l-5 2a.5.5 0 0 1-.65-.65l2-5a.5.5 0 0 1 .11-.168zM11.207 2.5 13.5 4.793 14.793 3.5 12.5 1.207zm1.586 3L10.5 3.207 4 9.707V10h.5a.5.5 0 0 1 .5.5v.5h.5a.5.5 0 0 1 .5.5v.5h.293zm-9.761 5.175-.106.106-1.528 3.821 3.821-1.528.106-.106A.5.5 0 0 1 5 12.5V12h-.5a.5.5 0 0 1-.5-.5V11h-.5a.5.5 0 0 1-.468-.325"/></svg>
<svg class="a" style="left:1246.90px;top:865.50px;" width="31.25" height="31.25" viewBox="0 0 16 16" fill="#6c757d"><path d="M11.742 10.344a6.5 6.5 0 1 0-1.397 1.398h-.001q.044.06.098.115l3.85 3.85a1 1 0 0 0 1.415-1.414l-3.85-3.85a1 1 0 0 0-.115-.1zM12 6.5a5.5 5.5 0 1 1-11 0 5.5 5.5 0 0 1 11 0"/></svg>
<svg class="a" style="left:1246.90px;top:982.50px;" width="31.25" height="31.25" viewBox="0 0 16 16" fill="#6c757d"><path d="M12 1a1 1 0 0 1 1 1v12a1 1 0 0 1-1 1H4a1 1 0 0 1-1-1V2a1 1 0 0 1 1-1zM4 0a2 2 0 0 0-2 2v12a2 2 0 0 0 2 2h8a2 2 0 0 0 2-2V2a2 2 0 0 0-2-2z"/><path d="M4 2.5a.5.5 0 0 1 .5-.5h7a.5.5 0 0 1 .5.5v2a.5.5 0 0 1-.5.5h-7a.5.5 0 0 1-.5-.5zm0 4a.5.5 0 0 1 .5-.5h1a.5.5 0 0 1 .5.5v1a.5.5 0 0 1-.5.5h-1a.5.5 0 0 1-.5-.5zm0 3a.5.5 0 0 1 .5-.5h1a.5.5 0 0 1 .5.5v1a.5.5 0 0 1-.5.5h-1a.5.5 0 0 1-.5-.5zm0 3a.5.5 0 0 1 .5-.5h1a.5.5 0 0 1 .5.5v1a.5.5 0 0 1-.5.5h-1a.5.5 0 0 1-.5-.5zm3-6a.5.5 0 0 1 .5-.5h1a.5.5 0 0 1 .5.5v1a.5.5 0 0 1-.5.5h-1a.5.5 0 0 1-.5-.5zm0 3a.5.5 0 0 1 .5-.5h1a.5.5 0 0 1 .5.5v1a.5.5 0 0 1-.5.5h-1a.5.5 0 0 1-.5-.5zm0 3a.5.5 0 0 1 .5-.5h1a.5.5 0 0 1 .5.5v1a.5.5 0 0 1-.5.5h-1a.5.5 0 0 1-.5-.5zm3-6a.5.5 0 0 1 .5-.5h1a.5.5 0 0 1 .5.5v1a.5.5 0 0 1-.5.5h-1a.5.5 0 0 1-.5-.5zm0 3a.5.5 0 0 1 .5-.5h1a.5.5 0 0 1 .5.5v4a.5.5 0 0 1-.5.5h-1a.5.5 0 0 1-.5-.5z"/></svg>
<svg class="a" style="left:1246.90px;top:1100.10px;" width="31.25" height="31.25" viewBox="0 0 16 16" fill="#6c757d"><path d="M0 4a2 2 0 0 1 2-2h12a2 2 0 0 1 2 2v8a2 2 0 0 1-2 2H2a2 2 0 0 1-2-2zm2-1a1 1 0 0 0-1 1v.217l7 4.2 7-4.2V4a1 1 0 0 0-1-1zm13 2.383-4.708 2.825L15 11.105zm-.034 6.876-5.64-3.471L8 9.583l-1.326-.795-5.64 3.47A1 1 0 0 0 2 13h12a1 1 0 0 0 .966-.741M1 11.105l4.708-2.897L1 5.383z"/></svg>
<svg class="a" style="left:1246.90px;top:1215.40px;" width="31.25" height="31.25" viewBox="0 0 16 16" fill="#6c757d"><path d="M13.5 1a1.5 1.5 0 1 0 0 3 1.5 1.5 0 0 0 0-3M11 2.5a2.5 2.5 0 1 1 .603 1.628l-6.718 3.12a2.5 2.5 0 0 1 0 1.504l6.718 3.12a2.5 2.5 0 1 1-.488.876l-6.718-3.12a2.5 2.5 0 1 1 0-3.256l6.718-3.12A2.5 2.5 0 0 1 11 2.5m-8.5 4a1.5 1.5 0 1 0 0 3 1.5 1.5 0 0 0 0-3m11 5.5a1.5 1.5 0 1 0 0 3 1.5 1.5 0 0 0 0-3"/></svg>
<span class="t" style="left:1366.62px;top:626px;font-size:37.5px;color:#212529;">Project Overview</span>
<div class="a" style="left:1367.40px;top:727.50px;width:106.00px;height:47.20px;border:1.5px solid #dee2e6;border-radius:9px;box-sizing:border-box;background:#fff;"></div>
<span class="t" style="left:1380.93px;top:742px;font-size:21.875px;color:#212529;">10</span>
<svg class="a" style="left:1432.40px;top:745.10px" width="18" height="12" viewBox="0 0 18 12"><polyline points="1.5,2 9,9.5 16.5,2" fill="none" stroke="#343a40" stroke-width="2.6"/></svg>
<span class="t" style="left:1484.84px;top:739px;font-size:25px;color:#212529;">entries per page</span>
<span class="t" style="left:2765.76px;top:740px;font-size:25px;color:#212529;">Search:</span>
<div class="a" style="left:2865.60px;top:722.50px;width:369.50px;height:57.10px;border:1.5px solid #dee2e6;border-radius:9px;box-sizing:border-box;background:#fff;"></div>
<span class="t" style="left:1425.88px;top:814px;font-size:25px;font-weight:bold;color:#000;">Site</span>
<span class="t" style="left:1661.33px;top:814px;font-size:25px;font-weight:bold;color:#000;">Number of Segments</span>
<span class="t" style="left:2181.42px;top:814px;font-size:25px;font-weight:bold;color:#000;">Total Distance assessed (km)</span>
<span class="t" style="left:2807.52px;top:814px;font-size:25px;font-weight:bold;color:#000;">Total Scope Length (km)</span>
<svg class="a" style="left:1514.90px;top:813.10px" width="14.80" height="28.00" viewBox="0 0 15 28"><polygon points="7.5,0 15,14 7.5,28 0,14" fill="#dcdcdc"/></svg>
<svg class="a" style="left:2008.90px;top:813.10px" width="14.80" height="28.00" viewBox="0 0 15 28"><polygon points="7.5,0 15,14 7.5,28 0,14" fill="#dcdcdc"/></svg>
<svg class="a" style="left:2647.80px;top:813.10px" width="14.80" height="28.00" viewBox="0 0 15 28"><polygon points="7.5,0 15,14 7.5,28 0,14" fill="#dcdcdc"/></svg>
<svg class="a" style="left:3201.10px;top:813.10px" width="14.80" height="28.00" viewBox="0 0 15 28"><polygon points="7.5,0 15,14 7.5,28 0,14" fill="#dcdcdc"/></svg>
<div class="a" style="left:1366.80px;top:861.20px;width:1868.30px;height:64.00px;background:#f2f2f2;"></div>
<div class="a" style="left:1366.80px;top:988.50px;width:1868.30px;height:63.30px;background:#f2f2f2;"></div>
<div class="a" style="left:1366.80px;top:1115.80px;width:1868.30px;height:63.30px;background:#f2f2f2;"></div>
<div class="a" style="left:1367.00px;top:861.00px;width:1868.10px;height:1.00px;background:#000;"></div>
<div class="a" style="left:1367.00px;top:925.00px;width:1868.10px;height:1.00px;background:#dee2e6;"></div>
<div class="a" style="left:1367.00px;top:988.00px;width:1868.10px;height:1.00px;background:#dee2e6;"></div>
<div class="a" style="left:1367.00px;top:1051.00px;width:1868.10px;height:1.00px;background:#dee2e6;"></div>
<div class="a" style="left:1367.00px;top:1115.00px;width:1868.10px;height:1.00px;background:#dee2e6;"></div>
<div class="a" style="left:1367.00px;top:1179.00px;width:1868.10px;height:1.00px;background:#dee2e6;"></div>
<span class="t" style="left:1450.95px;top:881px;font-size:25px;color:#000;">1</span>
<span class="t" style="left:1789.95px;top:881px;font-size:25px;color:#000;">8</span>
<span class="t" style="left:2356.45px;top:881px;font-size:25px;color:#000;">3</span>
<span class="t" style="left:2952.55px;top:881px;font-size:25px;color:#000;">2</span>
<span class="t" style="left:1450.95px;top:945px;font-size:25px;color:#000;">2</span>
<span class="t" style="left:1789.95px;top:945px;font-size:25px;color:#000;">4</span>
<span class="t" style="left:2356.45px;top:945px;font-size:25px;color:#000;">2</span>
<span class="t" style="left:2952.55px;top:945px;font-size:25px;color:#000;">3</span>
<span class="t" style="left:1450.95px;top:1008px;font-size:25px;color:#000;">3</span>
<span class="t" style="left:1789.95px;top:1008px;font-size:25px;color:#000;">6</span>
<span class="t" style="left:2356.45px;top:1008px;font-size:25px;color:#000;">5</span>
<span class="t" style="left:2952.55px;top:1008px;font-size:25px;color:#000;">4</span>
<span class="t" style="left:1450.95px;top:1071px;font-size:25px;color:#000;">4</span>
<span class="t" style="left:1789.95px;top:1071px;font-size:25px;color:#000;">2</span>
<span class="t" style="left:2356.45px;top:1071px;font-size:25px;color:#000;">4</span>
<span class="t" style="left:2952.55px;top:1071px;font-size:25px;color:#000;">5</span>
<span class="t" style="left:1450.95px;top:1135px;font-size:25px;color:#000;">5</span>
<span class="t" style="left:1789.95px;top:1135px;font-size:25px;color:#000;">3</span>
<span class="t" style="left:2356.45px;top:1135px;font-size:25px;color:#000;">3</span>
<span class="t" style="left:2952.55px;top:1135px;font-size:25px;color:#000;">2</span>
<span class="t" style="left:1366.76px;top:1289px;font-size:25px;color:#212529;">Showing 1 to 5 of 5 entries</span>
<div class="a" style="left:2986.10px;top:1270.00px;width:249.70px;height:58.70px;background:#e9ecef;border:1.5px solid #dee2e6;border-radius:9px;box-sizing:border-box;"></div>
<span class="t" style="left:3005.35px;top:1287px;font-size:25px;color:#495057;">«</span>
<div class="a" style="left:3038.00px;top:1270.00px;width:1.00px;height:58.70px;background:#dee2e6;"></div>
<span class="t" style="left:3057.59px;top:1287px;font-size:25px;color:#495057;">‹</span>
<div class="a" style="left:3085.00px;top:1270.00px;width:52.90px;height:58.70px;background:#0d6efd;"></div>
<span class="t" style="left:3104.50px;top:1287px;font-size:25px;color:#fff;">1</span>
<span class="t" style="left:3156.29px;top:1287px;font-size:25px;color:#495057;">›</span>
<div class="a" style="left:3182.50px;top:1270.00px;width:1.00px;height:58.70px;background:#dee2e6;"></div>
<div class="a" style="left:3182.50px;top:1270.00px;width:1.00px;height:58.70px;background:#dee2e6;"></div>
<span class="t" style="left:3202.45px;top:1287px;font-size:25px;color:#495057;">»</span>
<div class="a" style="left:1366.80px;top:1356.30px;width:1868.30px;height:1.60px;background:#dee2e6;"></div>
<div class="a" style="left:1601.00px;top:1394.80px;width:215.90px;height:59.10px;background:#0e5080;border-radius:9.4px;"></div>
<svg class="a" style="left:1620.00px;top:1411.12px;" width="25.00" height="25.00" viewBox="0 0 16 16" fill="#fff"><path d="M6.002 5.5a1.5 1.5 0 1 1-3 0 1.5 1.5 0 0 1 3 0"/><path d="M2.002 1a2 2 0 0 0-2 2v10a2 2 0 0 0 2 2h12a2 2 0 0 0 2-2V3a2 2 0 0 0-2-2zm12 1a1 1 0 0 1 1 1v6.5l-3.777-1.947a.5.5 0 0 0-.577.093l-3.71 3.71-2.66-1.772a.5.5 0 0 0-.63.062L1.002 12V3a1 1 0 0 1 1-1z"/></svg>
<span class="t" style="left:1658.56px;top:1412px;font-size:25px;color:#fff;">Site 1 image</span>
<div class="a" style="left:1849.10px;top:1394.80px;width:216.50px;height:59.10px;background:#0e5080;border-radius:9.4px;"></div>
<svg class="a" style="left:1868.10px;top:1411.12px;" width="25.00" height="25.00" viewBox="0 0 16 16" fill="#fff"><path d="M6.002 5.5a1.5 1.5 0 1 1-3 0 1.5 1.5 0 0 1 3 0"/><path d="M2.002 1a2 2 0 0 0-2 2v10a2 2 0 0 0 2 2h12a2 2 0 0 0 2-2V3a2 2 0 0 0-2-2zm12 1a1 1 0 0 1 1 1v6.5l-3.777-1.947a.5.5 0 0 0-.577.093l-3.71 3.71-2.66-1.772a.5.5 0 0 0-.63.062L1.002 12V3a1 1 0 0 1 1-1z"/></svg>
<span class="t" style="left:1906.66px;top:1412px;font-size:25px;color:#fff;">Site 2 image</span>
<div class="a" style="left:2097.70px;top:1394.80px;width:216.40px;height:59.10px;background:#0e5080;border-radius:9.4px;"></div>
<svg class="a" style="left:2116.70px;top:1411.12px;" width="25.00" height="25.00" viewBox="0 0 16 16" fill="#fff"><path d="M6.002 5.5a1.5 1.5 0 1 1-3 0 1.5 1.5 0 0 1 3 0"/><path d="M2.002 1a2 2 0 0 0-2 2v10a2 2 0 0 0 2 2h12a2 2 0 0 0 2-2V3a2 2 0 0 0-2-2zm12 1a1 1 0 0 1 1 1v6.5l-3.777-1.947a.5.5 0 0 0-.577.093l-3.71 3.71-2.66-1.772a.5.5 0 0 0-.63.062L1.002 12V3a1 1 0 0 1 1-1z"/></svg>
<span class="t" style="left:2155.26px;top:1412px;font-size:25px;color:#fff;">Site 3 image</span>
<div class="a" style="left:2346.20px;top:1394.80px;width:216.50px;height:59.10px;background:#0e5080;border-radius:9.4px;"></div>
<svg class="a" style="left:2365.20px;top:1411.12px;" width="25.00" height="25.00" viewBox="0 0 16 16" fill="#fff"><path d="M6.002 5.5a1.5 1.5 0 1 1-3 0 1.5 1.5 0 0 1 3 0"/><path d="M2.002 1a2 2 0 0 0-2 2v10a2 2 0 0 0 2 2h12a2 2 0 0 0 2-2V3a2 2 0 0 0-2-2zm12 1a1 1 0 0 1 1 1v6.5l-3.777-1.947a.5.5 0 0 0-.577.093l-3.71 3.71-2.66-1.772a.5.5 0 0 0-.63.062L1.002 12V3a1 1 0 0 1 1-1z"/></svg>
<span class="t" style="left:2403.76px;top:1412px;font-size:25px;color:#fff;">Site 4 image</span>
<div class="a" style="left:2594.80px;top:1394.80px;width:216.40px;height:59.10px;background:#0e5080;border-radius:9.4px;"></div>
<svg class="a" style="left:2613.80px;top:1411.12px;" width="25.00" height="25.00" viewBox="0 0 16 16" fill="#fff"><path d="M6.002 5.5a1.5 1.5 0 1 1-3 0 1.5 1.5 0 0 1 3 0"/><path d="M2.002 1a2 2 0 0 0-2 2v10a2 2 0 0 0 2 2h12a2 2 0 0 0 2-2V3a2 2 0 0 0-2-2zm12 1a1 1 0 0 1 1 1v6.5l-3.777-1.947a.5.5 0 0 0-.577.093l-3.71 3.71-2.66-1.772a.5.5 0 0 0-.63.062L1.002 12V3a1 1 0 0 1 1-1z"/></svg>
<span class="t" style="left:2652.36px;top:1412px;font-size:25px;color:#fff;">Site 5 image</span>
<div class="a" style="left:3311.40px;top:722.00px;width:390.40px;height:171.30px;border:1.5px solid #d3d3d3;border-radius:9.4px;box-sizing:border-box;background:#fff;"></div>
<div class="a" style="left:3311.40px;top:722.00px;width:390.40px;height:65.25px;border:1.5px solid #d3d3d3;border-radius:9.4px 9.4px 0 0;box-sizing:border-box;background:#e2e3e5;"></div>
<span class="t" style="left:3371.09px;top:739px;font-size:31.25px;color:#212529;">Total Scope Length</span>
<span class="t" style="left:3462.84px;top:822px;font-size:37.5px;color:#212529;">5 Km</span>
<div class="a" style="left:3311.40px;top:931.00px;width:390.40px;height:171.40px;border:1.5px solid #d3d3d3;border-radius:9.4px;box-sizing:border-box;background:#fff;"></div>
<div class="a" style="left:3311.40px;top:931.00px;width:390.40px;height:65.25px;border:1.5px solid #d3d3d3;border-radius:9.4px 9.4px 0 0;box-sizing:border-box;background:#e2e3e5;"></div>
<span class="t" style="left:3358.96px;top:948px;font-size:31.25px;color:#212529;">Number of Segments</span>
<span class="t" style="left:3485.74px;top:1031px;font-size:37.5px;color:#212529;">20</span>
<div class="a" style="left:3311.40px;top:1141.60px;width:390.40px;height:207.50px;border:1.5px solid #d3d3d3;border-radius:9.4px;box-sizing:border-box;background:#fff;"></div>
<div class="a" style="left:3311.40px;top:1141.60px;width:390.40px;height:101.55px;border:1.5px solid #d3d3d3;border-radius:9.4px 9.4px 0 0;box-sizing:border-box;background:#e2e3e5;"></div>
<span class="t" style="left:3406.73px;top:1158px;font-size:31.25px;color:#212529;">Total Distance</span>
<span class="t" style="left:3438.86px;top:1194px;font-size:31.25px;color:#212529;">Assessed</span>
<span class="t" style="left:3462.84px;top:1278px;font-size:37.5px;color:#212529;">7 Km</span>
<div class="a" style="left:3311.40px;top:1387.40px;width:390.40px;height:170.30px;border:1.5px solid #d3d3d3;border-radius:9.4px;box-sizing:border-box;background:#fff;"></div>
<div class="a" style="left:3311.40px;top:1387.40px;width:390.40px;height:64.85px;border:1.5px solid #d3d3d3;border-radius:9.4px 9.4px 0 0;box-sizing:border-box;background:#e2e3e5;"></div>
<span class="t" style="left:3394.58px;top:1404px;font-size:31.25px;color:#212529;">Number of Sites</span>
<span class="t" style="left:3496.17px;top:1487px;font-size:37.5px;color:#212529;">2</span>
<div class="a" style="left:3311.40px;top:1597.60px;width:390.40px;height:227.00px;border:1.5px solid #d3d3d3;border-radius:9.4px;box-sizing:border-box;background:#fff;"></div>
<div class="a" style="left:3311.40px;top:1597.60px;width:390.40px;height:63.35px;border:1.5px solid #d3d3d3;border-radius:9.4px 9.4px 0 0;box-sizing:border-box;background:#e2e3e5;"></div>
<span class="t" style="left:3436.25px;top:1613px;font-size:31.25px;color:#212529;">Pipe Type</span>
<span class="t" style="left:3382.58px;top:1695px;font-size:37.5px;color:#212529;">150/Cast Iron -</span>
<span class="t" style="left:3418.01px;top:1749px;font-size:37.5px;color:#212529;">200/PCCP</span>
<div class="a" style="left:1170.00px;top:1881.00px;width:2583.00px;height:66.00px;background:#fff;"></div>
<span class="t" style="left:896.63px;top:1912px;font-size:25px;color:#212529;">Copyright © 2025 KenWave Solutions</span>
<svg class="a" style="left:2808.30px;top:1911.00px;" width="24.80" height="24.80" viewBox="0 0 16 16" fill="#212529"><path d="M14 1a1 1 0 0 1 1 1v12a1 1 0 0 1-1 1H2a1 1 0 0 1-1-1V2a1 1 0 0 1 1-1zM2 0a2 2 0 0 0-2 2v12a2 2 0 0 0 2 2h12a2 2 0 0 0 2-2V2a2 2 0 0 0-2-2z"/><path d="m8.93 6.588-2.29.287-.082.38.45.083c.294.07.352.176.288.469l-.738 3.468c-.194.897.105 1.319.808 1.319.545 0 1.178-.252 1.465-.598l.088-.416c-.2.176-.492.246-.686.246-.275 0-.375-.193-.304-.533zM9 4.5a1 1 0 1 1-2 0 1 1 0 0 1 2 0"/></svg>
<svg class="a" style="left:2852.90px;top:1911.00px;" width="24.80" height="24.80" viewBox="0 0 16 16" fill="#212529"><path d="M8 0c-.69 0-1.843.265-2.928.56-1.11.3-2.229.655-2.887.87a1.54 1.54 0 0 0-1.044 1.262c-.596 4.477.787 7.795 2.465 9.99a11.8 11.8 0 0 0 2.517 2.453c.386.273.744.482 1.048.625.28.132.581.24.829.24s.548-.108.829-.24a7 7 0 0 0 1.048-.625 11.8 11.8 0 0 0 2.517-2.453c1.678-2.195 3.061-5.513 2.465-9.99a1.54 1.54 0 0 0-1.044-1.263 63 63 0 0 0-2.887-.87C9.843.266 8.69 0 8 0m0 5a1.5 1.5 0 0 1 .5 2.915l.385 1.99a.5.5 0 0 1-.491.595h-.788a.5.5 0 0 1-.49-.595l.384-1.99A1.5 1.5 0 0 1 8 5"/></svg>
<svg class="a" style="left:2897.40px;top:1911.00px;" width="24.80" height="24.80" viewBox="0 0 16 16" fill="#212529"><path d="M4 2.5a.5.5 0 0 1 .5-.5h1a.5.5 0 0 1 .5.5v1a.5.5 0 0 1-.5.5h-1a.5.5 0 0 1-.5-.5zm3 0a.5.5 0 0 1 .5-.5h1a.5.5 0 0 1 .5.5v1a.5.5 0 0 1-.5.5h-1a.5.5 0 0 1-.5-.5zm3.5-.5a.5.5 0 0 0-.5.5v1a.5.5 0 0 0 .5.5h1a.5.5 0 0 0 .5-.5v-1a.5.5 0 0 0-.5-.5zM4 5.5a.5.5 0 0 1 .5-.5h1a.5.5 0 0 1 .5.5v1a.5.5 0 0 1-.5.5h-1a.5.5 0 0 1-.5-.5zM7.5 5a.5.5 0 0 0-.5.5v1a.5.5 0 0 0 .5.5h1a.5.5 0 0 0 .5-.5v-1a.5.5 0 0 0-.5-.5zm2.5.5a.5.5 0 0 1 .5-.5h1a.5.5 0 0 1 .5.5v1a.5.5 0 0 1-.5.5h-1a.5.5 0 0 1-.5-.5zM4.5 8a.5.5 0 0 0-.5.5v1a.5.5 0 0 0 .5.5h1a.5.5 0 0 0 .5-.5v-1a.5.5 0 0 0-.5-.5zm2.5.5a.5.5 0 0 1 .5-.5h1a.5.5 0 0 1 .5.5v1a.5.5 0 0 1-.5.5h-1a.5.5 0 0 1-.5-.5zm3.5-.5a.5.5 0 0 0-.5.5v1a.5.5 0 0 0 .5.5h1a.5.5 0 0 0 .5-.5v-1a.5.5 0 0 0-.5-.5z"/><path d="M2 1a1 1 0 0 1 1-1h10a1 1 0 0 1 1 1v14a1 1 0 0 1-1 1H3a1 1 0 0 1-1-1zm11 0H3v14h3v-2.5a.5.5 0 0 1 .5-.5h3a.5.5 0 0 1 .5.5V15h3z"/></svg>
<div class="a" style="left:3.10px;top:1928.40px;width:110.70px;height:31.60px;background:#cecece;border-top-right-radius:4px;"></div>
<span class="t" style="left:9.53px;top:1935px;font-size:14px;color:#111;">127.0.0.1:8000</span>
</body></html>
